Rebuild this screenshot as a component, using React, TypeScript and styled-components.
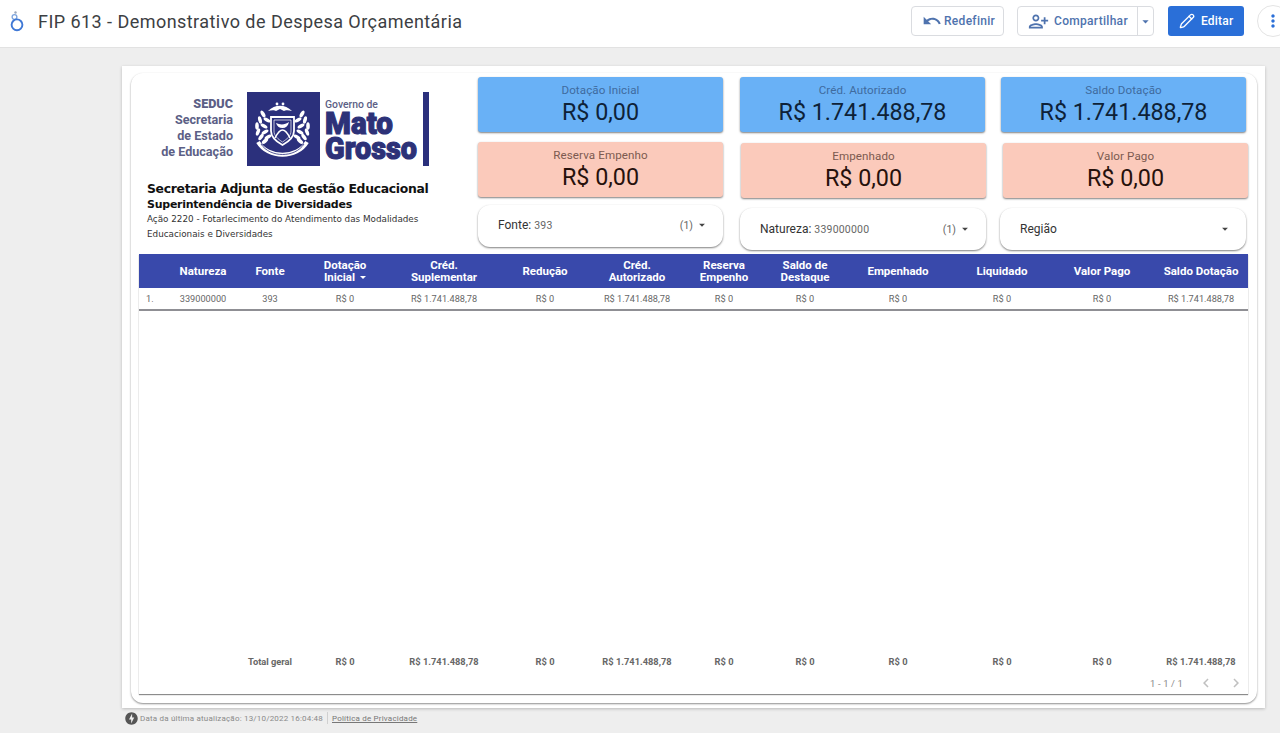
import React from "react";
import styled, { createGlobalStyle } from "styled-components";
import { MdUndo, MdOutlinePersonAdd, MdMoreVert, MdOfflineBolt, MdChevronLeft, MdChevronRight, MdArrowDropDown } from "react-icons/md";
import { Pencil } from "lucide-react";

const Global = createGlobalStyle`
  html, body { margin: 0; padding: 0; height: 733px; overflow: hidden; background: #eeeeee; }
  body { font-family: Roboto, "Liberation Sans", sans-serif; }
  * { box-sizing: border-box; }
`;

const Page = styled.div`
  width: 1280px;
  height: 733px;
  display: flex;
  flex-direction: column;
  overflow: hidden;
`;

const TopBar = styled.header`
  height: 48px;
  flex: none;
  background: #fff;
  border-bottom: 1px solid #e2e2e2;
  display: flex;
  align-items: center;
  padding-left: 9px;
  padding-bottom: 5px;
`;

const Title = styled.h1`
  margin: 0 0 0 11px;
  font: 400 18px Roboto, sans-serif;
  letter-spacing: 0.45px;
  color: #3c4043;
  flex: 1;
  white-space: nowrap;
`;

const Actions = styled.div`
  display: flex;
  align-items: center;
  width: 369px;
  flex: none;
`;

const OutlineButton = styled.div<{ $w: number; $ml: number }>`
  height: 30px;
  width: ${(p) => p.$w}px;
  margin-left: ${(p) => p.$ml}px;
  flex: none;
  border: 1px solid #dadce0;
  border-radius: 4px;
  background: #fff;
  display: flex;
  align-items: center;
  color: #4f73ae;
  font: 500 12px Roboto, sans-serif;
  letter-spacing: 0.3px;
  padding-left: 10px;
  svg { flex: none; }
`;

const ButtonLabel = styled.span<{ $ml: number }>`
  margin-left: ${(p) => p.$ml}px;
`;

const ShareIcon = styled(MdOutlinePersonAdd)`
  transform: scaleX(-1);
`;

const SplitDivider = styled.span`
  width: 1px;
  align-self: stretch;
  background: #dadce0;
  margin-left: auto;
`;

const EditButton = styled.div`
  height: 30px;
  width: 76px;
  margin-left: 14px;
  flex: none;
  border-radius: 3px;
  background: #2a6fd8;
  color: #fff;
  display: flex;
  align-items: center;
  padding-left: 11px;
  font: 500 12px Roboto, sans-serif;
  letter-spacing: 0.2px;
  svg { flex: none; }
`;

const RoundButton = styled.div`
  width: 32px;
  height: 32px;
  margin-left: 13px;
  flex: none;
  border-radius: 50%;
  border: 1px solid #e4e4e4;
  display: flex;
  align-items: center;
  justify-content: center;
  color: #2a6fd8;
`;

const Main = styled.main`
  flex: 1;
  padding: 18px 0 0 122px;
`;

const Canvas = styled.section`
  width: 1143px;
  height: 642px;
  background: #fff;
  box-shadow: 0 1px 3px rgba(0, 0, 0, 0.22);
  padding: 7px 8px 5px 9px;
`;

const Card = styled.div`
  height: 100%;
  border-radius: 12px;
  background: #fff;
  box-shadow: 0 1px 2px rgba(0, 0, 0, 0.45);
  padding: 4px 9px 9px 8px;
  display: flex;
  flex-direction: column;
`;

const TopRow = styled.div`
  height: 177px;
  flex: none;
  display: flex;
`;

const Brand = styled.div`
  width: 339px;
  flex: none;
  display: flex;
  flex-direction: column;
`;

const LogoArt = styled.svg`
  display: block;
  margin: 14px 0 0 21px;
  flex: none;
`;

const BrandText = styled.div`
  margin: 14px 0 0 8px;
  font-family: "DejaVu Sans", sans-serif;
  color: #111;
`;

const BrandTitle = styled.div`
  font-size: 12.4px;
  font-weight: 700;
  line-height: 16px;
  white-space: nowrap;
  letter-spacing: -0.3px;
`;

const BrandSub = styled.div`
  font-size: 11px;
  font-weight: 700;
  line-height: 15px;
  white-space: nowrap;
  letter-spacing: -0.25px;
`;

const BrandNote = styled.div`
  font-size: 8.8px;
  line-height: 15px;
  margin-top: 0;
  color: #333;
  width: 290px;
`;

const Kpis = styled.div`
  flex: 1;
  display: grid;
  grid-template-columns: 245px 245px 245px;
  column-gap: 17px;
`;

const KpiColumn = styled.div`
  display: flex;
  flex-direction: column;
`;

const Score = styled.div<{ $tone: "blue" | "peach"; $mt: number; $ml: number }>`
  height: 55px;
  margin-top: ${(p) => p.$mt}px;
  margin-left: ${(p) => p.$ml}px;
  width: 245px;
  flex: none;
  border-radius: 3px;
  background: ${(p) => (p.$tone === "blue" ? "#69b1f6" : "#fbcabb")};
  box-shadow: 0 1px 2px rgba(0, 0, 0, 0.5);
  text-align: center;
  color: ${(p) => (p.$tone === "blue" ? "#0e2238" : "#26110c")};
  padding-top: 7px;
`;

const ScoreLabel = styled.div<{ $tone: "blue" | "peach" }>`
  font-size: 11.6px;
  line-height: 13px;
  letter-spacing: 0.1px;
  color: ${(p) => (p.$tone === "blue" ? "#3f6b9e" : "#7c5a50")};
`;

const ScoreValue = styled.div`
  font-size: 23.3px;
  line-height: 30px;
`;

const FilterBox = styled.div<{ $mt: number; $ml: number; $w: number; $pb: number }>`
  height: 42px;
  width: ${(p) => p.$w}px;
  margin-top: ${(p) => p.$mt}px;
  margin-left: ${(p) => p.$ml}px;
  flex: none;
  border-radius: 12px;
  background: #fff;
  box-shadow: 0 1px 2px rgba(0, 0, 0, 0.5);
  display: flex;
  align-items: center;
  padding: 0 14px ${(p) => p.$pb}px 20px;
  font-size: 12px;
  color: #333;
`;

const FilterValue = styled.span`
  margin-left: 3px;
  font-size: 10.5px;
  color: #666;
  letter-spacing: 0.2px;
`;

const FilterCount = styled.span`
  margin-left: auto;
  margin-right: 2px;
  font-size: 10.5px;
  color: #666;
`;

const FilterCaret = styled(MdArrowDropDown)<{ $auto?: boolean }>`
  flex: none;
  color: #444;
  margin-left: ${(p) => (p.$auto ? "auto" : "0")};
`;

const Table = styled.div`
  flex: 1;
  display: flex;
  flex-direction: column;
  background: #fff;
  box-shadow: 0 1px 1px rgba(0, 0, 0, 0.45);
`;

const columns = "33px 62px 72px 78px 120px 82px 102px 72px 90px 96px 112px 88px 102px";

const HeaderRow = styled.div`
  height: 34px;
  flex: none;
  display: grid;
  grid-template-columns: ${columns};
  background: #3949ab;
  align-items: center;
  text-align: center;
  color: #fff;
  font-size: 11.5px;
  font-weight: 700;
  line-height: 12px;
  padding-bottom: 1px;
`;

const LastCell = styled.div`
  padding-left: 8px;
  white-space: nowrap;
`;

const SortCaret = styled.span`
  display: inline-block;
  width: 0;
  height: 0;
  margin-left: 5px;
  vertical-align: 2px;
  border-left: 3px solid transparent;
  border-right: 3px solid transparent;
  border-top: 3px solid #fff;
`;

const DataRow = styled.div`
  height: 23px;
  flex: none;
  display: grid;
  grid-template-columns: ${columns};
  align-items: center;
  text-align: center;
  border-bottom: 2px solid #8f8f94;
  color: #666;
  font-size: 9.2px;
  white-space: nowrap;
`;

const IndexCell = styled.div`
  text-align: left;
  padding-left: 7px;
`;

const Spacer = styled.div`
  flex: 1;
`;

const TotalRow = styled.div`
  height: 14px;
  flex: none;
  display: grid;
  grid-template-columns: ${columns};
  align-items: center;
  text-align: center;
  color: #666;
  font-size: 9.3px;
  font-weight: 700;
  white-space: nowrap;
`;

const Pager = styled.div`
  height: 20px;
  margin: 5px 0 1px;
  flex: none;
  display: flex;
  align-items: center;
  justify-content: flex-end;
  gap: 14px;
  padding-right: 3px;
  color: #8a8a8a;
  font-size: 9.4px;
  letter-spacing: 0.15px;
`;

const PagerIcons = styled.div`
  display: flex;
  gap: 12px;
  color: #c0c0c0;
`;

const Footer = styled.footer`
  display: flex;
  align-items: center;
  margin: 2px 0 0 2px;
  font-size: 8px;
  letter-spacing: 0.19px;
  color: #8a8a8a;
  height: 16px;
  svg { color: #555; flex: none; margin-right: 1px; }
`;

const FooterSep = styled.span`
  width: 1px;
  height: 12px;
  background: #d0d0d0;
  margin: 0 4px;
`;

const FooterLink = styled.span`
  text-decoration: underline;
  color: #777;
`;

const AppLogo = () => (
  <svg width="18" height="24" viewBox="0 0 18 24">
    <circle cx="6.5" cy="3.5" r="1.2" fill="#9aa7bb" />
    <circle cx="5.5" cy="8" r="2.4" fill="none" stroke="#7da4dd" strokeWidth="1.3" />
    <circle cx="8" cy="15.8" r="5.4" fill="none" stroke="#3f78d6" strokeWidth="1.9" />
  </svg>
);

const Leaf = ({ x, y, r }: { x: number; y: number; r: number }) => (
  <ellipse cx={x} cy={y} rx="3.8" ry="1.8" transform={`rotate(${r} ${x} ${y})`} fill="#fff" />
);

const Logo = () => {
  const navy = "#2b307c";
  const grey = "#5c5f86";
  const gov = "#2d3278";
  return (
    <LogoArt width="272" height="76" viewBox="0 0 272 76">
      <g fontFamily="Roboto, sans-serif" fontWeight="700" fontSize="12.6" fill={grey} textAnchor="end">
        <text x="73" y="17" fontWeight="900">SEDUC</text>
        <text x="73" y="33">Secretaria</text>
        <text x="73" y="49">de Estado</text>
        <text x="73" y="65">de Educação</text>
      </g>
      <rect x="87" y="1" width="73" height="74" fill={navy} />
      <g>
        <path d="M108 20c7-7 17-7 24 0-3-1-7-1-8 0l-4-2-4 2c-1-1-5-1-8 0z" fill="#fff" />
        <circle cx="117" cy="13" r="1.4" fill="#fff" />
        <circle cx="123" cy="13" r="1.4" fill="#fff" />
        <path d="M111 26h23v14c0 7-6 11-11.500 14-5.500-3-11.500-7-11.500-14z" fill="none" stroke="#fff" strokeWidth="1.8" />
        <path d="M114 29h17v11c0 5-4 8-8.500 11-4.500-3-8.500-6-8.500-11z" fill="none" stroke="#fff" strokeWidth=".7" />
        <path d="M116 32c4 2 9 2 13-1-1 4-3 6-6.500 6s-5.500-2-6.500-5z" fill="#fff" />
        <path d="M115 47c3-6 5.500-8 7.500-8s4.500 2 7.500 8" fill="none" stroke="#fff" strokeWidth="1.5" />
        <path d="M98 51c10 17 39 17 49 0" fill="none" stroke="#fff" strokeWidth="4" />
        <path d="M101 53c9 14 34 14 43 0" fill="none" stroke={navy} strokeWidth=".8" />
        {[
          [103, 23, 60], [100, 29, 75], [97, 35, 90], [98, 41, 110], [101, 46, 125], [105, 50, 140],
          [107, 29, 30], [104, 35, 30], [105, 41, 150], [108, 46, 150],
          [142, 23, -60], [145, 29, -75], [148, 35, -90], [147, 41, -110], [144, 46, -125], [140, 50, -140],
          [138, 29, -30], [141, 35, -30], [140, 41, -150], [137, 46, -150],
        ].map(([x, y, r]) => (
          <Leaf key={`${x}-${y}`} x={x} y={y} r={r} />
        ))}
      </g>
      <text x="165" y="17" fontFamily="Roboto, sans-serif" fontSize="10.4" fontWeight="500" fill={grey}>Governo de</text>
      <g fontFamily="Roboto, sans-serif" fontWeight="900" fontSize="31" fill={gov} stroke={gov} strokeWidth="1.1">
        <text x="165" y="43" textLength="68" lengthAdjust="spacingAndGlyphs">Mato</text>
        <text x="165" y="68" textLength="92" lengthAdjust="spacingAndGlyphs">Grosso</text>
      </g>
      <rect x="263" y="1" width="6" height="74" fill={navy} />
    </LogoArt>
  );
};

const App = () => {
  const money = "R$ 1.741.488,78";
  const row = ["R$ 0", money, "R$ 0", money, "R$ 0", "R$ 0", "R$ 0", "R$ 0", "R$ 0"];
  return (
    <Page>
      <Global />
      <TopBar>
        <AppLogo />
        <Title>FIP 613 - Demonstrativo de Despesa Orçamentária</Title>
        <Actions>
          <OutlineButton $w={93} $ml={0}>
            <MdUndo size={20} />
            <ButtonLabel $ml={2}>Redefinir</ButtonLabel>
          </OutlineButton>
          <OutlineButton $w={137} $ml={13}>
            <ShareIcon size={21} />
            <ButtonLabel $ml={5}>Compartilhar</ButtonLabel>
            <SplitDivider />
            <MdArrowDropDown size={15} />
          </OutlineButton>
          <EditButton>
            <Pencil size={16} strokeWidth={2} />
            <ButtonLabel $ml={6}>Editar</ButtonLabel>
          </EditButton>
          <RoundButton>
            <MdMoreVert size={20} />
          </RoundButton>
        </Actions>
      </TopBar>
      <Main>
        <Canvas>
          <Card>
            <TopRow>
              <Brand>
                <Logo />
                <BrandText>
                  <BrandTitle>Secretaria Adjunta de Gestão Educacional</BrandTitle>
                  <BrandSub>Superintendência de Diversidades</BrandSub>
                  <BrandNote>Ação 2220 - Fotarlecimento do Atendimento das Modalidades Educacionais e Diversidades</BrandNote>
                </BrandText>
              </Brand>
              <Kpis>
                <KpiColumn>
                  <Score $tone="blue" $mt={0} $ml={0}><ScoreLabel $tone="blue">Dotação Inicial</ScoreLabel><ScoreValue>R$ 0,00</ScoreValue></Score>
                  <Score $tone="peach" $mt={10} $ml={0}><ScoreLabel $tone="peach">Reserva Empenho</ScoreLabel><ScoreValue>R$ 0,00</ScoreValue></Score>
                  <FilterBox $mt={8} $ml={0} $w={245} $pb={2}>
                    Fonte:<FilterValue>393</FilterValue><FilterCount>(1)</FilterCount><FilterCaret size={14} />
                  </FilterBox>
                </KpiColumn>
                <KpiColumn>
                  <Score $tone="blue" $mt={0} $ml={0}><ScoreLabel $tone="blue">Créd. Autorizado</ScoreLabel><ScoreValue>{money}</ScoreValue></Score>
                  <Score $tone="peach" $mt={11} $ml={1}><ScoreLabel $tone="peach">Empenhado</ScoreLabel><ScoreValue>R$ 0,00</ScoreValue></Score>
                  <FilterBox $mt={10} $ml={0} $w={246} $pb={0}>
                    Natureza:<FilterValue>339000000</FilterValue><FilterCount>(1)</FilterCount><FilterCaret size={14} />
                  </FilterBox>
                </KpiColumn>
                <KpiColumn>
                  <Score $tone="blue" $mt={0} $ml={-1}><ScoreLabel $tone="blue">Saldo Dotação</ScoreLabel><ScoreValue>{money}</ScoreValue></Score>
                  <Score $tone="peach" $mt={11} $ml={1}><ScoreLabel $tone="peach">Valor Pago</ScoreLabel><ScoreValue>R$ 0,00</ScoreValue></Score>
                  <FilterBox $mt={10} $ml={-2} $w={246} $pb={0}>
                    Região<FilterCaret size={14} $auto />
                  </FilterBox>
                </KpiColumn>
              </Kpis>
            </TopRow>
            <Table>
              <HeaderRow>
                <div />
                <div>Natureza</div>
                <div>Fonte</div>
                <div>Dotação<br />Inicial<SortCaret /></div>
                <div>Créd.<br />Suplementar</div>
                <div>Redução</div>
                <div>Créd.<br />Autorizado</div>
                <div>Reserva<br />Empenho</div>
                <div>Saldo de<br />Destaque</div>
                <div>Empenhado</div>
                <div>Liquidado</div>
                <div>Valor Pago</div>
                <LastCell>Saldo Dotação</LastCell>
              </HeaderRow>
              <DataRow>
                <IndexCell>1.</IndexCell>
                <div>339000000</div>
                <div>393</div>
                {row.map((v, i) => <div key={i}>{v}</div>)}
                <LastCell>{money}</LastCell>
              </DataRow>
              <Spacer />
              <TotalRow>
                <div />
                <div />
                <div>Total geral</div>
                {row.map((v, i) => <div key={i}>{v}</div>)}
                <LastCell>{money}</LastCell>
              </TotalRow>
              <Pager>
                <span>1 - 1 / 1</span>
                <PagerIcons>
                  <MdChevronLeft size={18} />
                  <MdChevronRight size={18} />
                </PagerIcons>
              </Pager>
            </Table>
          </Card>
        </Canvas>
        <Footer>
          <MdOfflineBolt size={15} />
          <span>Data da última atualização: 13/10/2022 16:04:48</span>
          <FooterSep />
          <FooterLink>Política de Privacidade</FooterLink>
        </Footer>
      </Main>
    </Page>
  );
};

export default App;
